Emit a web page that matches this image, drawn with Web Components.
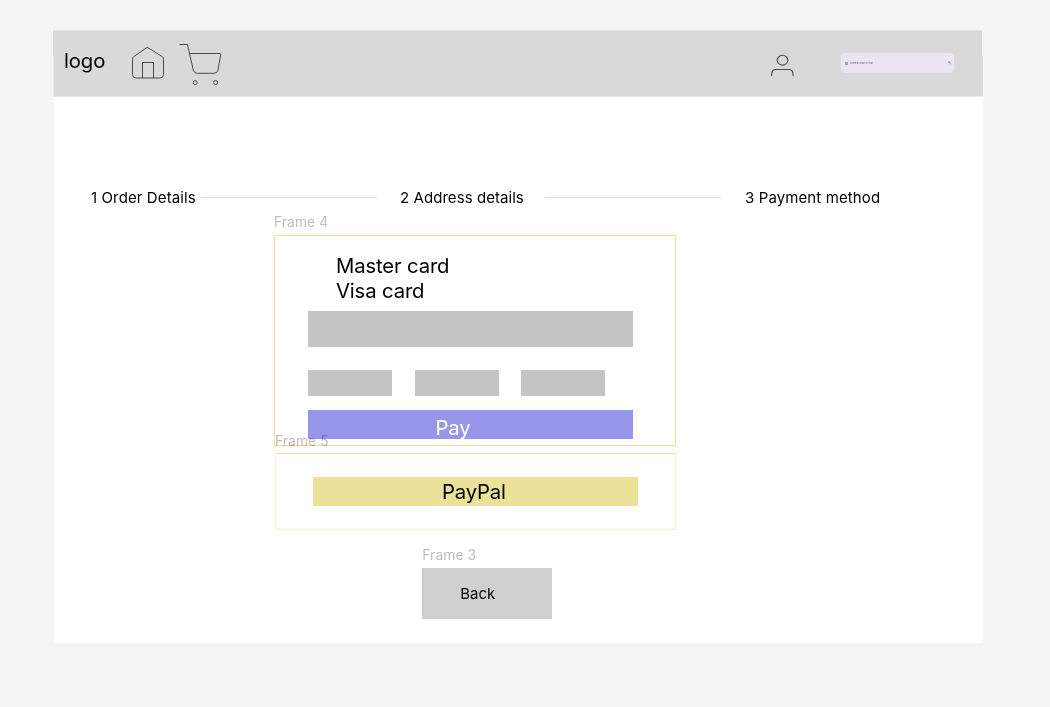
<!DOCTYPE html>
<html lang="en">
<head>
<meta charset="utf-8">
<title>Payment method</title>
<style>
html,body{margin:0;height:100%;background:#f5f5f5;overflow:hidden}
body{font-family:Inter,"Liberation Sans",sans-serif;color:#000}
</style>
</head>
<body>
<checkout-page></checkout-page>
<script>
function define(name, html){
  const template = document.createElement('template');
  template.innerHTML = html;
  customElements.define(name, class extends HTMLElement{
    constructor(){
      super();
      this.attachShadow({mode:'open'}).append(template.content.cloneNode(true));
    }
  });
}

define('home-icon', `<style>:host{display:block;width:34px;height:36px}svg{display:block}</style>
<svg width="34" height="36" fill="none" stroke="#4a4a4a" stroke-width="1"><path d="M1.500 13.200Q1.500 11.600 2.800 10.600L16.200 1.200L31.200 10.600Q32.500 11.600 32.500 13.200V28.500Q32.500 32 29 32H5Q1.500 32 1.500 28.500ZM11.500 32V16.500H22.500V32"/></svg>`);

define('cart-icon', `<style>:host{display:block;width:44px;height:44px}svg{display:block}</style>
<svg width="44" height="44" fill="none" stroke="#4a4a4a" stroke-width="1"><path d="M.5 1.500H8.500L14 26Q14.900 30.300 18.500 30.300H35Q38.500 30.300 39 27L41.800 11.500Q42 10.500 41 10.500H10.500"/><circle cx="16.200" cy="39.500" r="2"/><circle cx="36.600" cy="39.500" r="2"/></svg>`);

define('user-icon', `<style>:host{display:block;width:24px;height:24px}svg{display:block}</style>
<svg width="24" height="24" fill="none" stroke="#4a4a4a" stroke-width="1.100"><ellipse cx="11.500" cy="6.200" rx="5.300" ry="4.900"/><path d="M.7 22V20Q.7 15.500 5.200 15.500H17.500Q22 15.500 22 20V22"/></svg>`);

define('search-field', `<style>
:host{display:flex;box-sizing:border-box;width:113px;height:20px;border-radius:4.500px;background:#ebe5f0;align-items:center;padding:0 3px 0 4px}
span{font-size:2.700px;line-height:4px;color:#6b6670;margin-left:2px;flex:1;white-space:nowrap}
svg{display:block}
</style>
<svg width="3" height="3" stroke="#77727c" stroke-width=".6"><path d="M0 .5H3M0 1.500H3M0 2.500H3"/></svg>
<span><slot></slot></span>
<svg width="3" height="4" fill="none" stroke="#77727c" stroke-width=".6"><circle cx="1.100" cy="1.300" r=".8"/><path d="M1.700 2L3 3.300"/></svg>`);

define('top-bar', `<style>
:host{display:flex;box-sizing:border-box;width:930px;background:#d9d9d9;align-items:flex-start;padding-left:11px;border-top:1px solid #e3e3e3;border-bottom:1px solid #e9e9e9;margin-left:-1px;
clip-path:polygon(0 0,929px 0,929px 26px,930px 26px,930px 100%,.6px 100%,.6px 26px,0 26px)}
.logo{font-size:20.300px;line-height:26px;width:67px;margin-top:17px;letter-spacing:-.12px}
home-icon{margin-top:15px}
cart-icon{margin:12px 0 0 14px}
user-icon{margin:23px 0 0 548px}
search-field{margin:22px 0 0 46px}
</style>
<div class="logo"><slot></slot></div><home-icon></home-icon><cart-icon></cart-icon><user-icon></user-icon><search-field>Hinted search text</search-field>`);

define('step-bar', `<style>
:host{display:grid;grid-template-columns:110px 176px 23px 145px 176px 24px auto;align-items:center;height:20px;font-size:15px;line-height:20px;white-space:nowrap;letter-spacing:.11px}
::slotted([slot=second]){letter-spacing:.06px}
i{height:1px;background:#dcdcdc;display:block;margin-top:-1px}
</style>
<slot name="first"></slot><i></i><slot name="second"></slot><i></i><slot name="third"></slot>`);

define('frame-label', `<style>:host{display:block;font-size:13.800px;line-height:18px;height:18px;color:#bdbdbd;white-space:nowrap;letter-spacing:.08px}</style><slot></slot>`);

define('text-input', `<style>:host{display:block;background:#c4c4c4}</style>`);

define('action-button', `<style>
:host{display:block;box-sizing:border-box;background:var(--fill);color:var(--ink,#000);font-size:20.300px;line-height:26px;white-space:nowrap;letter-spacing:-.2px}
</style><slot></slot>`);

define('card-form', `<style>
:host{display:block;box-sizing:border-box;width:402px;height:211px;border:1px solid #ffdc9b;padding:17px 0 0 33px}
.names{font-size:20.300px;line-height:25px;height:58px;padding-left:28px;letter-spacing:-.14px}
.number{width:325px;height:36px}
.row{display:flex;gap:22.500px;margin:23px 0 14px}
.row text-input{width:84px;height:26px}
action-button{--fill:#9896eb;--ink:#fff;width:325px;height:29px;padding:5px 0 0 127.500px}
</style>
<div class="names"><div>Master card</div><div>Visa card</div></div>
<text-input class="number"></text-input>
<div class="row"><text-input></text-input><text-input></text-input><text-input></text-input></div>
<action-button>Pay</action-button>`);

define('paypal-form', `<style>
:host{display:block;box-sizing:border-box;width:401px;height:77px;border:1px solid #ffecca;border-top-color:#ffdc9b;padding:23px 0 0 37px}
action-button{--fill:#ece198;width:325px;height:29px;padding:2px 0 0 129px}
</style><action-button>PayPal</action-button>`);

define('back-button', `<style>
:host{display:block;box-sizing:border-box;width:129.500px;height:51px;background:#cfcfcf;font-size:15px;line-height:20px;padding:16px 0 0 38px}
</style><slot></slot>`);

define('checkout-page', `<style>
:host{display:block;box-sizing:border-box;width:1050px;height:707px;padding:30px 0 0 54px}
main{display:flow-root;width:929px;height:613px;background:linear-gradient(#f5f5f5 60px,#fff 60px)}
top-bar{height:67px}
step-bar{margin:91px 0 0 37px}
.pay{margin:5px 0 0 220px;width:402px}
.pay card-form{margin-top:4px}
/* The second frame's caption overlaps the bottom edge of the first frame. */
.second{margin:-14px 0 0 1px;position:relative}
.second paypal-form{margin-top:3px}
.back{margin:16px 0 0 368.300px}
.back back-button{margin-top:4px}
.over{mix-blend-mode:multiply}
</style>
<main>
<top-bar>logo</top-bar>
<step-bar><span slot="first">1 Order Details</span><span slot="second" style="grid-column:4">2 Address details</span><span slot="third" style="grid-column:7">3 Payment method</span></step-bar>
<section class="pay">
<frame-label>Frame 4</frame-label><card-form></card-form>
<div class="second"><frame-label class="over">Frame 5</frame-label><paypal-form></paypal-form></div>
</section>
<section class="back"><frame-label>Frame 3</frame-label><back-button>Back</back-button></section>
</main>`);
</script>
</body>
</html>
